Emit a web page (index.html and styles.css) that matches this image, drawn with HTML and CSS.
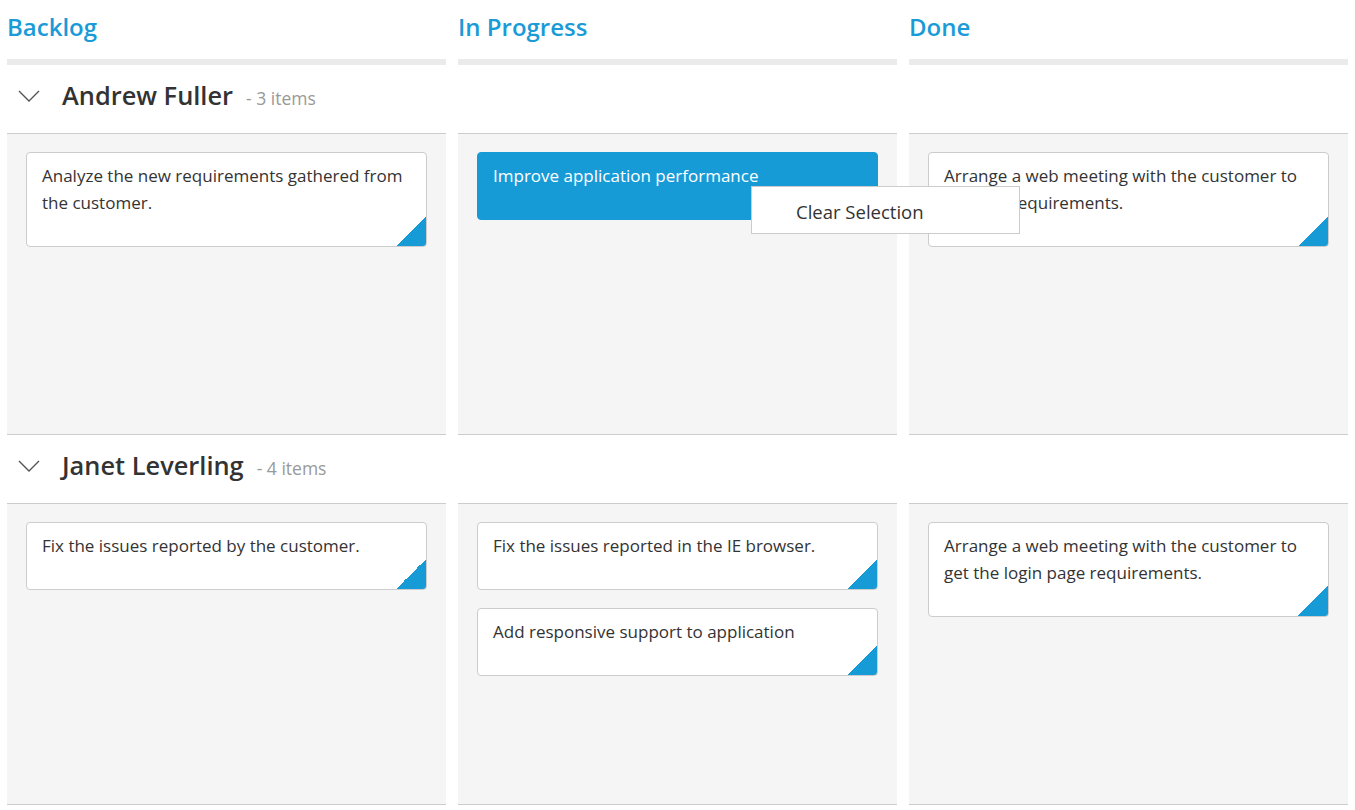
FILE: index.html
```html
<!DOCTYPE html>
<html lang="en">
<head>
<meta charset="utf-8">
<title>Kanban</title>
<link rel="stylesheet" href="styles.css">
</head>
<body>
<div class="board">
  <div class="col-head">Backlog</div>
  <div class="col-head">In Progress</div>
  <div class="col-head">Done</div>

  <div class="lane-head">
    <svg class="chevron" width="22" height="12" viewBox="0 0 22 12"><path d="M1 1 L11 11 L21 1" fill="none" stroke="#555" stroke-width="1.4"/></svg>
    <span class="lane-name">Andrew Fuller</span>
    <span class="lane-count">- 3 items</span>
  </div>
  <div class="lane-head"></div>
  <div class="lane-head"></div>

  <div class="cell">
    <div class="card">Analyze the new requirements gathered from the customer.</div>
  </div>
  <div class="cell">
    <div class="card selected">Improve application performance</div>
  </div>
  <div class="cell">
    <div class="card">Arrange a web meeting with the customer to get new requirements.</div>
  </div>

  <div class="lane-head">
    <svg class="chevron" width="22" height="12" viewBox="0 0 22 12"><path d="M1 1 L11 11 L21 1" fill="none" stroke="#555" stroke-width="1.4"/></svg>
    <span class="lane-name">Janet Leverling</span>
    <span class="lane-count">- 4 items</span>
  </div>
  <div class="lane-head"></div>
  <div class="lane-head"></div>

  <div class="cell">
    <div class="card">Fix the issues reported by the customer.</div>
  </div>
  <div class="cell">
    <div class="card">Fix the issues reported in the IE browser.</div>
    <div class="card">Add responsive support to application</div>
  </div>
  <div class="cell">
    <div class="card">Arrange a web meeting with the customer to get the login page requirements.</div>
  </div>
</div>

<div class="ctx-menu">Clear Selection</div>
</body>
</html>
```

FILE: styles.css
```css
html, body {
  margin: 0;
  padding: 0;
  background: #ffffff;
  font-family: "Open Sans", "Noto Sans", sans-serif;
  color: #333333;
}

.board {
  display: grid;
  grid-template-columns: repeat(3, 1fr);
  column-gap: 12px;
  padding: 0 7px;
}

.col-head {
  height: 59px;
  border-bottom: 6px solid #ebebeb;
  box-sizing: content-box;
  color: #1a9bd7;
  font-size: 24px;
  line-height: 53px;
  font-weight: 600;
}

.lane-head {
  height: 68px;
  border-bottom: 1px solid #cccccc;
  display: flex;
  align-items: center;
  white-space: nowrap;
}

.chevron {
  margin-left: 11px;
  margin-right: 22px;
  margin-top: -6px;
  flex: none;
}

.lane-name {
  font-size: 25.4px;
  font-weight: 600;
  color: #333333;
  margin-top: -8px;
}

.lane-count {
  font-size: 17.5px;
  color: #999999;
  margin-left: 13px;
  margin-top: -2px;
}

.cell {
  height: 301px;
  background: #f5f5f5;
  border-bottom: 1px solid #cccccc;
  padding: 18px 19px;
  box-sizing: border-box;
  display: flex;
  flex-direction: column;
  gap: 18px;
}

.card {
  background: #ffffff linear-gradient(135deg, transparent 50%, #179bd7 50%) no-repeat right bottom / 30px 30px;
  border: 1px solid #cccccc;
  border-radius: 4px;
  padding: 9px 15px 30px 15px;
  font-size: 17px;
  line-height: 27px;
  color: #333333;
}

.card.selected {
  background: #179bd7;
  border-color: #179bd7;
  color: #ffffff;
}

.ctx-menu {
  position: absolute;
  left: 751px;
  top: 186px;
  width: 269px;
  height: 48px;
  box-sizing: border-box;
  background: #ffffff;
  border: 1px solid #cccccc;
  padding-left: 44px;
  font-size: 18.5px;
  line-height: 50px;
  color: #333333;
}
```
